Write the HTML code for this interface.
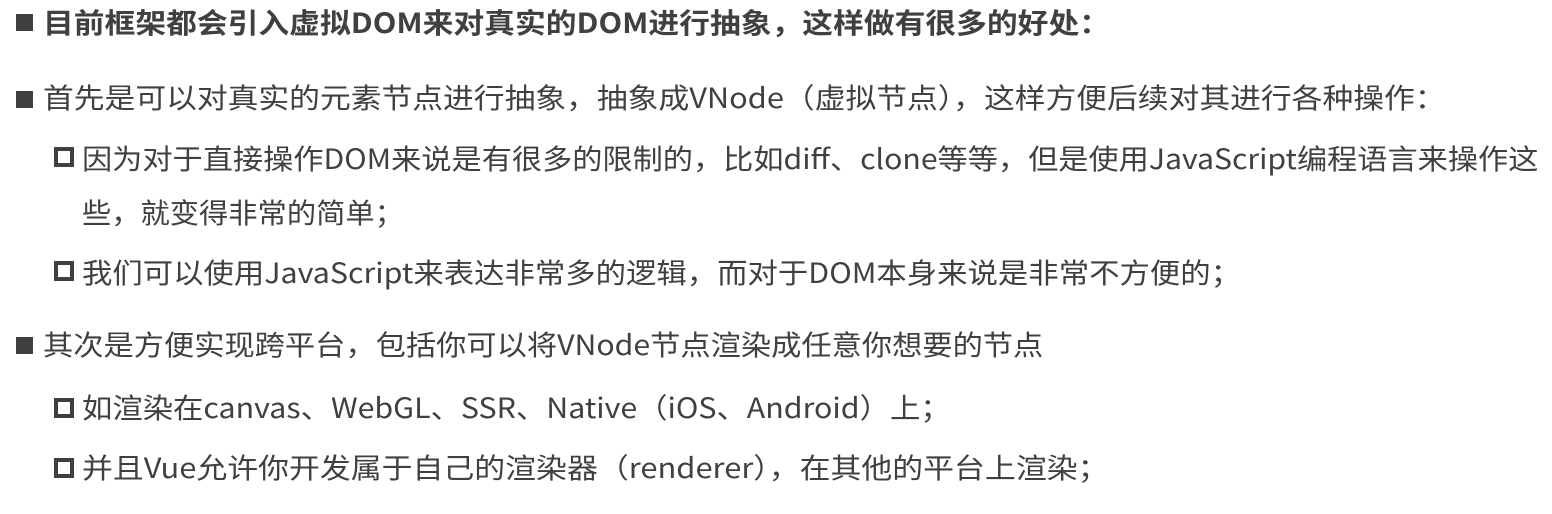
<!DOCTYPE html>
<html><head><meta charset="utf-8"><style>
body{margin:0;width:1552px;height:514px;background:#fff;overflow:hidden;position:relative;font-family:"Noto Sans CJK SC","Liberation Sans",sans-serif;color:#404040;}
.l{position:absolute;font-size:28px;line-height:40px;white-space:nowrap;transform-origin:0 50%;}
.b{position:absolute;width:17px;height:17px;background:#404040;}
.h{position:absolute;width:12px;height:12px;border:4.5px solid #404040;background:#fff;box-sizing:content-box;}
</style></head><body>
<div class="b" style="left:16px;top:14px"></div>
<div class="l" style="left:43px;top:2px;font-weight:bold;transform:scaleX(1.099)">目前框架都会引入虚拟DOM来对真实的DOM进行抽象，这样做有很多的好处：</div>
<div class="b" style="left:16px;top:91px"></div>
<div class="l" style="left:43px;top:77px;transform:scaleX(1.099)">首先是可以对真实的元素节点进行抽象，抽象成VNode（虚拟节点），这样方便后续对其进行各种操作：</div>
<div class="h" style="left:54px;top:147px"></div>
<div class="l" style="left:82px;top:138px;transform:scaleX(1.078)">因为对于直接操作DOM来说是有很多的限制的，比如diff、clone等等，但是使用JavaScript编程语言来操作这</div>
<div class="l" style="left:82px;top:192px;transform:scaleX(1.045)">些，就变得非常的简单；</div>
<div class="h" style="left:54px;top:261px"></div>
<div class="l" style="left:82px;top:252px;transform:scaleX(1.085)">我们可以使用JavaScript来表达非常多的逻辑，而对于DOM本身来说是非常不方便的；</div>
<div class="b" style="left:16px;top:337px"></div>
<div class="l" style="left:43px;top:324px;transform:scaleX(1.08)">其次是方便实现跨平台，包括你可以将VNode节点渲染成任意你想要的节点</div>
<div class="h" style="left:54px;top:398px"></div>
<div class="l" style="left:82px;top:387px;transform:scaleX(1.084)">如渲染在canvas、WebGL、SSR、Native（iOS、Android）上；</div>
<div class="h" style="left:54px;top:458px"></div>
<div class="l" style="left:82px;top:447px;transform:scaleX(1.103)">并且Vue允许你开发属于自己的渲染器（renderer），在其他的平台上渲染；</div>
</body></html>
